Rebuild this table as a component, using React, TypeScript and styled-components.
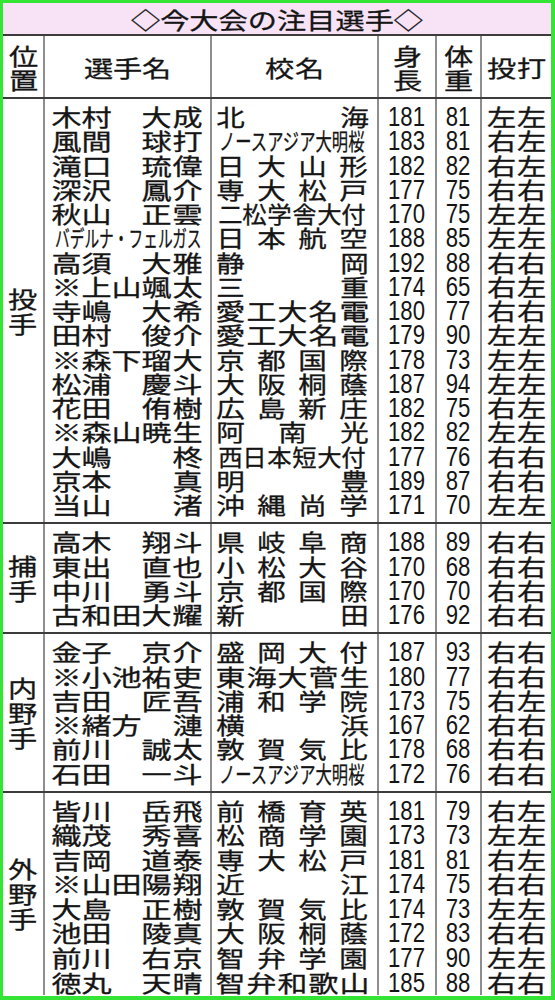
import styled, { createGlobalStyle } from "styled-components";

const GlobalStyle = createGlobalStyle`
    html, body {
        margin: 0;
        padding: 0;
        overflow: hidden;
        background: #ffffff;
    }
    body {
        font-family: "Noto Sans CJK JP", "Noto Sans", sans-serif;
        color: #151515;
        -webkit-text-stroke: 0.3px #151515;
    }
`;

// 列幅: 位置 / 選手名 / 校名 / 身長 / 体重 / 投打
const COLS = "40px 167px 167px 58px 45px 71px";
const RULE = "#3c3c3c";
const DIVIDER = "#8e8e8e";
const WIDE = 1.27;

const Frame = styled.div`
    width: 555px;
    height: 1000px;
    box-sizing: border-box;
    border-style: solid;
    border-color: #35e535;
    border-width: 3px 4px 4px 3px;
    background: #ffffff;
    overflow: hidden;
`;

const TitleBar = styled.div`
    height: 33px;
    box-sizing: border-box;
    padding-top: 2px;
    line-height: 29px;
    text-align: center;
    background: #f7e3f5;
    border-bottom: 2px solid ${RULE};
    font-size: 23px;
    white-space: nowrap;
`;

const TitleText = styled.span`
    display: inline-block;
    transform: scaleX(1.27);
`;

const HeaderRow = styled.div`
    display: grid;
    grid-template-columns: ${COLS};
    height: 61px;
`;

const HeadCell = styled.div<{ $divider?: boolean }>`
    display: flex;
    flex-direction: column;
    align-items: center;
    justify-content: center;
    border-left: ${props => (props.$divider ? `2px solid ${DIVIDER}` : "none")};
    font-size: 23px;
    line-height: 24px;
`;

const HeadLine = styled.div`
    display: flex;
    justify-content: center;
    gap: ${23 * (WIDE - 1)}px;
`;

const Section = styled.div`
    display: grid;
    grid-template-columns: ${COLS};
    border-top: 2px solid ${RULE};
`;

const PosCol = styled.div`
    display: flex;
    flex-direction: column;
    align-items: center;
    justify-content: center;
    padding-right: 2px;
    font-size: 23px;
    line-height: 25px;
`;

const Col = styled.div<{ $pb: number }>`
    border-left: 2px solid ${DIVIDER};
    padding: 6px 0 ${props => props.$pb}px;
`;

const TextLine = styled.div<{ $h: number; $pl: number; $pr: number; $center?: boolean }>`
    display: flex;
    justify-content: ${props => (props.$center ? "center" : "space-between")};
    gap: ${props => (props.$center ? 23 * (WIDE - 1) : 0)}px;
    height: ${props => props.$h}px;
    padding: 0 ${props => props.$pr}px 0 ${props => props.$pl}px;
    font-size: 23px;
    line-height: 22px;
    white-space: nowrap;
`;

const Ch = styled.span<{ $sx: number }>`
    display: inline-block;
    width: 23px;
    text-align: center;
    transform: scaleX(${props => props.$sx});
`;

const Squeeze = styled.span<{ $sx: number }>`
    display: inline-block;
    white-space: nowrap;
    transform: scaleX(${props => props.$sx});
    transform-origin: 0 50%;
`;

const NumLine = styled.div<{ $h: number }>`
    height: ${props => props.$h}px;
    line-height: ${props => props.$h}px;
    text-align: center;
    font-family: "Liberation Sans", Arial, sans-serif;
    font-size: 27px;
    -webkit-text-stroke: 0;
`;

const Num = styled.span`
    display: inline-block;
    transform: scaleX(0.82);
`;

type Player = [string, string, number, number, string];

interface IGroup {
    pos: string;
    h: number;
    pb: number;
    players: Player[];
}

const groups: IGroup[] = [
    {
        pos: "投手",
        h: 24.25,
        pb: 5,
        players: [
            ["木村　大成", "北海", 181, 81, "左左"],
            ["風間　球打", "ノースアジア大明桜", 183, 81, "右左"],
            ["滝口　琉偉", "日大山形", 182, 82, "右左"],
            ["深沢　鳳介", "専大松戸", 177, 75, "右右"],
            ["秋山　正雲", "二松学舎大付", 170, 75, "左左"],
            ["バデルナ・フェルガス", "日本航空", 188, 85, "左左"],
            ["高須　大雅", "静岡", 192, 88, "右右"],
            ["※上山颯太", "三重", 174, 65, "右左"],
            ["寺嶋　大希", "愛工大名電", 180, 77, "右右"],
            ["田村　俊介", "愛工大名電", 179, 90, "左左"],
            ["※森下瑠大", "京都国際", 178, 73, "左左"],
            ["松浦　慶斗", "大阪桐蔭", 187, 94, "左左"],
            ["花田　侑樹", "広島新庄", 182, 75, "右左"],
            ["※森山暁生", "阿南光", 182, 82, "左左"],
            ["大嶋　　柊", "西日本短大付", 177, 76, "右右"],
            ["京本　　真", "明豊", 189, 87, "右右"],
            ["当山　　渚", "沖縄尚学", 171, 70, "左左"],
        ],
    },
    {
        pos: "捕手",
        h: 24.25,
        pb: 5,
        players: [
            ["高木　翔斗", "県岐阜商", 188, 89, "右右"],
            ["東出　直也", "小松大谷", 170, 68, "右右"],
            ["中川　勇斗", "京都国際", 170, 70, "右右"],
            ["古和田大耀", "新田", 176, 92, "右右"],
        ],
    },
    {
        pos: "内野手",
        h: 24.25,
        pb: 5,
        players: [
            ["金子　京介", "盛岡大付", 187, 93, "右右"],
            ["※小池祐吏", "東海大菅生", 180, 77, "右右"],
            ["吉田　匠吾", "浦和学院", 173, 75, "右左"],
            ["※緒方　漣", "横浜", 167, 62, "右右"],
            ["前川　誠太", "敦賀気比", 178, 68, "右右"],
            ["石田　一斗", "ノースアジア大明桜", 172, 76, "右右"],
        ],
    },
    {
        pos: "外野手",
        h: 24.55,
        pb: 0,
        players: [
            ["皆川　岳飛", "前橋育英", 181, 79, "右左"],
            ["織茂　秀喜", "松商学園", 173, 73, "左左"],
            ["吉岡　道泰", "専大松戸", 181, 81, "右左"],
            ["※山田陽翔", "近江", 174, 75, "右右"],
            ["大島　正樹", "敦賀気比", 174, 73, "左左"],
            ["池田　陵真", "大阪桐蔭", 172, 83, "右右"],
            ["前川　右京", "智弁学園", 177, 90, "左左"],
            ["徳丸　天晴", "智弁和歌山", 185, 88, "右右"],
        ],
    },
];

// 文字幅 147px に収める
const FIT = 147;

function Spread({ text, sx }: { text: string; sx: number }) {
    return (
        <>
            {[...text].map((c, i) => (
                <Ch key={i} $sx={sx}>
                    {c}
                </Ch>
            ))}
        </>
    );
}

function PlayerName({ name }: { name: string }) {
    const chars = [...name];
    if (chars.length > 5) return <Squeeze $sx={FIT / (chars.length * 23)}>{name}</Squeeze>;
    return <Spread text={name} sx={1.31} />;
}

function SchoolName({ name }: { name: string }) {
    const n = [...name].length;
    if (n > 6) return <Squeeze $sx={FIT / (n * 23)}>{name}</Squeeze>;
    const sx = n >= 6 ? 1.06 : n === 5 ? 1.3 : 1.24;
    return <Spread text={name} sx={sx} />;
}

function Group({ group }: { group: IGroup }) {
    const { pos, h, pb, players } = group;
    return (
        <Section>
            <PosCol>
                <Spread text={pos} sx={WIDE} />
            </PosCol>
            <Col $pb={pb}>
                {players.map(p => (
                    <TextLine key={p[0]} $h={h} $pl={10} $pr={11.4}>
                        <PlayerName name={p[0]} />
                    </TextLine>
                ))}
            </Col>
            <Col $pb={pb}>
                {players.map(p => (
                    <TextLine key={p[0]} $h={h} $pl={6.5} $pr={11.5}>
                        <SchoolName name={p[1]} />
                    </TextLine>
                ))}
            </Col>
            <Col $pb={pb}>
                {players.map(p => (
                    <NumLine key={p[0]} $h={h}>
                        <Num>{p[2]}</Num>
                    </NumLine>
                ))}
            </Col>
            <Col $pb={pb}>
                {players.map(p => (
                    <NumLine key={p[0]} $h={h}>
                        <Num>{p[3]}</Num>
                    </NumLine>
                ))}
            </Col>
            <Col $pb={pb}>
                {players.map(p => (
                    <TextLine key={p[0]} $h={h} $pl={0} $pr={0} $center>
                        <Spread text={p[4]} sx={WIDE} />
                    </TextLine>
                ))}
            </Col>
        </Section>
    );
}

function App() {
    return (
        <>
            <GlobalStyle />
            <Frame>
                <TitleBar>
                    <TitleText>◇今大会の注目選手◇</TitleText>
                </TitleBar>
                <HeaderRow>
                    <HeadCell>
                        <Spread text="位置" sx={WIDE} />
                    </HeadCell>
                    <HeadCell $divider>
                        <HeadLine>
                            <Spread text="選手名" sx={WIDE} />
                        </HeadLine>
                    </HeadCell>
                    <HeadCell $divider>
                        <HeadLine>
                            <Spread text="校名" sx={WIDE} />
                        </HeadLine>
                    </HeadCell>
                    <HeadCell $divider>
                        <Spread text="身長" sx={WIDE} />
                    </HeadCell>
                    <HeadCell $divider>
                        <Spread text="体重" sx={WIDE} />
                    </HeadCell>
                    <HeadCell $divider>
                        <HeadLine>
                            <Spread text="投打" sx={WIDE} />
                        </HeadLine>
                    </HeadCell>
                </HeaderRow>
                {groups.map(g => (
                    <Group key={g.pos} group={g} />
                ))}
            </Frame>
        </>
    );
}

export default App;
